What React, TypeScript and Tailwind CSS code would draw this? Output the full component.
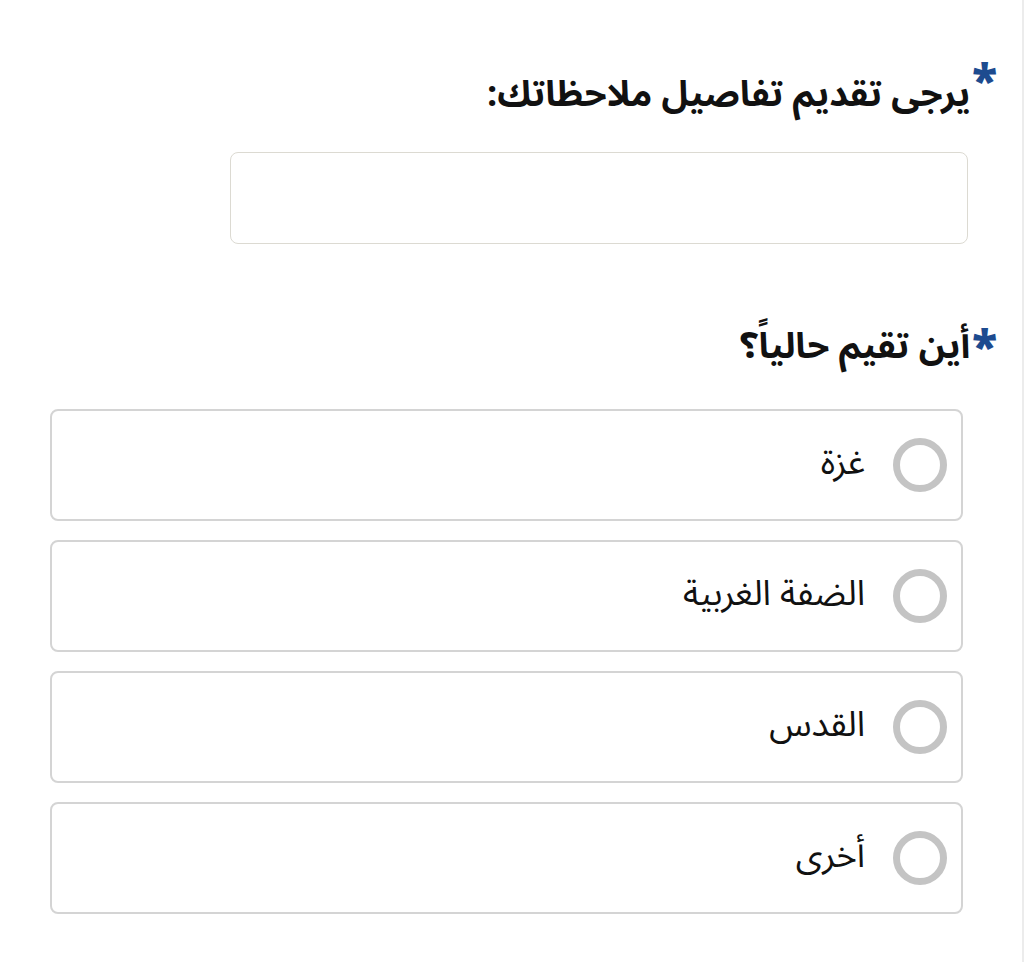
import React from "react";

const options = ["غزة", "الضفة الغربية", "القدس", "أخرى"];

function Star({ className }: { className: string }) {
  return <span className={"text-[#1d4b8f] font-black text-[46px] leading-none " + className}>*</span>;
}

export default function App() {
  return (
    <div
      dir="rtl"
      className="w-[1024px] min-h-[962px] bg-white border-r-2 border-[#ececec] pr-[54px] pl-[50px] pt-[58px] font-['Noto_Sans_Arabic','Noto_Naskh_Arabic','DejaVu_Sans',sans-serif] text-[#111]"
    >
      <div className="flex items-start -mr-[29px]">
        <Star className="mt-[2px] ml-[2px]" />
        <h2 className="text-[36px] font-bold leading-[50px] mt-[12px]">يرجى تقديم تفاصيل ملاحظاتك:</h2>
      </div>
      <div className="mt-[32px] w-[738px] h-[92px] rounded-[8px] border border-[#dcdad2] bg-white" />

      <div className="flex items-center -mr-[29px] mt-[78px]">
        <Star className="mt-[4px] ml-[2px]" />
        <h2 className="text-[36px] font-bold leading-[50px]">أين تقيم حالياً؟</h2>
      </div>

      <div className="mt-[37px] flex flex-col gap-[19px] mr-[5px]">
        {options.map((o) => (
          <label
            key={o}
            className="flex items-center h-[112px] rounded-[8px] border-2 border-[#d4d4d4] pr-[14px]"
          >
            <span className="w-[54px] h-[54px] rounded-full border-[7px] border-[#c4c4c4]" />
            <span className="mr-[28px] text-[35px] leading-none pb-[4px]">{o}</span>
          </label>
        ))}
      </div>
    </div>
  );
}
